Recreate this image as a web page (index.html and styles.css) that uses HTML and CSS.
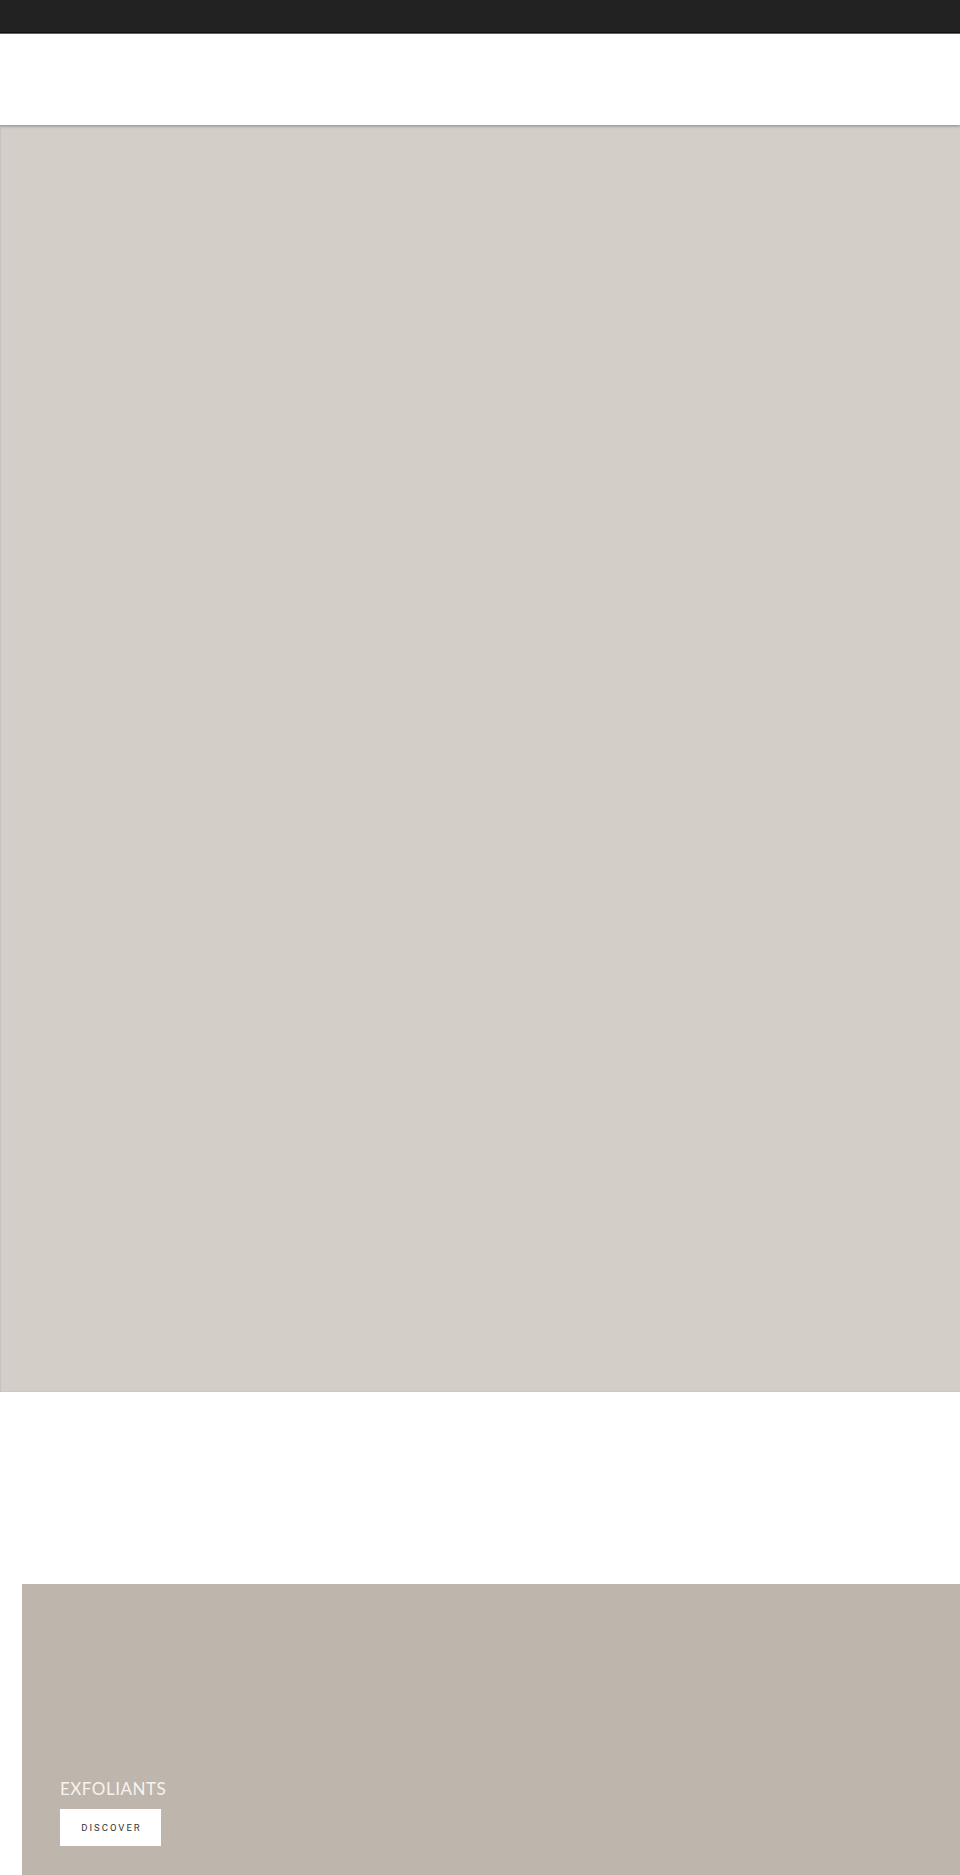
FILE: index.html
```html
<!DOCTYPE html>
<html lang="en">
<head>
<meta charset="utf-8">
<title>Exfoliants</title>
<link rel="stylesheet" href="styles.css">
</head>
<body>
<div class="topbar"></div>
<header class="header"></header>
<section class="hero"></section>
<section class="collections">
  <div class="card">
    <div class="card-content">
      <h2 class="card-title">EXFOLIANTS</h2>
      <a class="btn" href="#">DISCOVER</a>
    </div>
  </div>
</section>
</body>
</html>
```

FILE: styles.css
```css
html, body {
  margin: 0;
  padding: 0;
  background: #ffffff;
  font-family: Lato, "Liberation Sans", sans-serif;
}
.topbar {
  height: 32px;
  background: #222222;
  border-bottom: 1px solid #111111;
  box-shadow: 0 1px 0 #6a6a6a;
}
.header {
  height: 91px;
  background: #ffffff;
  position: relative;
  z-index: 2;
  box-shadow: 0 1px 3px rgba(0,0,0,0.35);
  margin-top: 1px;
}
.hero {
  height: 1267px;
  background: #d3cec8;
  border-left: 1px solid #c6c2bd;
  border-bottom: 1px solid #cbc7c2;
  box-sizing: border-box;
}
.collections {
  padding-top: 192px;
  padding-left: 22px;
}
.card {
  height: 291px;
  background: #beb5ac;
  display: flex;
  align-items: flex-end;
}
.card-content {
  padding: 0 0 29px 38px;
}
.card-title {
  margin: 0 0 10px 0;
  font-family: Lato, "Liberation Sans", sans-serif;
  font-weight: 400;
  font-size: 17px;
  line-height: 20px;
  letter-spacing: 0.5px;
  color: #f6f4f0;
}
.btn {
  display: flex;
  align-items: center;
  justify-content: center;
  width: 101px;
  height: 37px;
  background: #ffffff;
  color: #333333;
  text-decoration: none;
  font-family: Roboto, "Liberation Sans", sans-serif;
  font-size: 9.5px;
  letter-spacing: 2px;
  padding-left: 2px;
  box-sizing: border-box;
}
```
